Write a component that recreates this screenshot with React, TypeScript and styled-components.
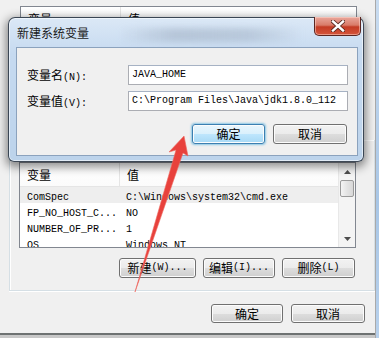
import styled, { createGlobalStyle } from "styled-components"

const GlobalStyle = createGlobalStyle`
  html, body {
    margin: 0;
    padding: 0;
    background: #f0f0f0;
  }
  body {
    font-family: "Noto Sans CJK SC", "Liberation Sans", sans-serif;
    color: #000;
  }
`

const Han = styled.span`
  font-family: "Noto Sans CJK SC", sans-serif;
  font-size: 12px;
`

const Latin = styled.span`
  font-family: "Liberation Mono", monospace;
  font-size: 10px;
`

const Mixed = ({ text }: { text: string }) => (
  <>
    {text
      .split(/([\u4e00-\u9fff]+)/)
      .filter(Boolean)
      .map((part, i) =>
        /[\u4e00-\u9fff]/.test(part) ? <Han key={i}>{part}</Han> : <Latin key={i}>{part}</Latin>
      )}
  </>
)

const Screen = styled.div`
  position: relative;
  width: 379px;
  height: 338px;
  overflow: hidden;
  display: flex;
`

const EnvWindow = styled.div`
  width: 376px;
  height: 338px;
  box-sizing: border-box;
  background: #f0f0f0;
  border-right: 1px solid #a9a9a9;
  display: flex;
  flex-direction: column;
  padding-top: 6px;
`

const GlassEdge = styled.div`
  width: 3px;
  height: 338px;
  background: linear-gradient(180deg, #c9dcf0, #a8c6e6 60%, #b8d1ec);
`

const ListBox = styled.div<{ $height: number; $left: number }>`
  margin-left: ${(p) => p.$left}px;
  width: 337px;
  height: ${(p) => p.$height}px;
  box-sizing: border-box;
  border: 1px solid #828790;
  background: #fff;
  display: flex;
  overflow: hidden;
`

const ListBody = styled.div`
  flex: 1;
  display: flex;
  flex-direction: column;
  overflow: hidden;
`

const HeaderRow = styled.div`
  display: grid;
  grid-template-columns: 100px 1fr;
  height: 24px;
  flex: none;
  box-sizing: border-box;
  border-bottom: 1px solid #e5e5e5;
  background: linear-gradient(180deg, #ffffff, #fbfbfb);
`

const HeaderCell = styled.div<{ $divider?: boolean }>`
  display: flex;
  align-items: center;
  padding-left: 7px;
  border-right: ${(p) => (p.$divider ? "1px solid #e5e5e5" : "none")};
  line-height: 14px;
`

const Row = styled.div<{ $selected?: boolean }>`
  display: grid;
  grid-template-columns: 100px 1fr;
  height: 16px;
  flex: none;
  align-items: center;
  background: ${(p) => (p.$selected ? "#eeeeee" : "transparent")};
  line-height: 14px;
  white-space: nowrap;
`

const Cell = styled.div<{ $pad: number }>`
  padding-left: ${(p) => p.$pad}px;
  overflow: hidden;
`

const ScrollBar = styled.div`
  width: 17px;
  flex: none;
  display: flex;
  flex-direction: column;
  background: #f4f4f4;
  border-left: 1px solid #e8e8e8;
  box-sizing: border-box;
`

const ScrollArrow = styled.div`
  height: 17px;
  display: flex;
  align-items: center;
  justify-content: center;
`

const ScrollThumb = styled.div`
  height: 17px;
  margin: 0 1px;
  box-sizing: border-box;
  border: 1px solid #9a9a9a;
  border-radius: 2px;
  background: linear-gradient(90deg, #f4f4f4, #e4e4e4 50%, #d8d8d8);
`

const ScrollTrack = styled.div`
  flex: 1;
`

const GroupBox = styled.div`
  margin-top: 6px;
  margin-left: 9px;
  width: 366px;
  box-sizing: border-box;
  border: 1px solid #d5dfe5;
  border-top: none;
  box-shadow: 1px 1px 0 #ffffff inset, 0 1px 0 #ffffff;
  padding: 22px 19px 12px 9px;
  display: flex;
  flex-direction: column;
`

const ButtonRow = styled.div<{ $top: number }>`
  display: flex;
  justify-content: flex-end;
  gap: 7px;
  margin-top: ${(p) => p.$top}px;
`

const Button = styled.div<{ $width: number; $height?: number; $focused?: boolean }>`
  width: ${(p) => p.$width}px;
  height: ${(p) => p.$height ?? 20}px;
  box-sizing: border-box;
  border: 1px solid ${(p) => (p.$focused ? "#3c7fb1" : "#707070")};
  border-radius: 3px;
  background: ${(p) =>
    p.$focused
      ? "linear-gradient(180deg, #eaf6fd 0%, #d9f0fc 50%, #bee6fd 51%, #a7d9f5 100%)"
      : "linear-gradient(180deg, #f2f2f2 0%, #ebebeb 50%, #dddddd 51%, #cfcfcf 100%)"};
  box-shadow: ${(p) =>
    p.$focused ? "0 0 2px 1px rgba(72, 170, 220, 0.6), inset 0 0 0 1px #fcfcfc" : "inset 0 0 0 1px #fcfcfc"};
  display: flex;
  align-items: center;
  justify-content: center;
  line-height: 14px;
  white-space: nowrap;
`

const FooterRow = styled.div`
  display: flex;
  justify-content: flex-end;
  gap: 8px;
  margin-top: 13px;
  margin-right: 10px;
`

const WindowBottom = styled.div`
  margin-top: auto;
  height: 3px;
  border-top: 2px solid #6e7272;
  background: #c8c8c8;
`

const Dialog = styled.div`
  position: absolute;
  left: 8px;
  top: 17px;
  width: 356px;
  height: 145px;
  box-sizing: border-box;
  border: 1px solid rgba(35, 45, 58, 0.85);
  border-radius: 7px 7px 6px 6px;
  background: linear-gradient(180deg, #dbe8f6 0%, #c6daf0 25%, #bcd3eb 100%);
  box-shadow: inset 0 0 0 1px rgba(255, 255, 255, 0.55), 0 3px 10px 2px rgba(0, 0, 0, 0.45);
  display: flex;
  flex-direction: column;
`

const TitleBar = styled.div`
  position: relative;
  height: 29px;
  flex: none;
  display: flex;
  align-items: center;
  padding-left: 8px;
`

const TitleGlass = styled.div`
  position: absolute;
  left: 110px;
  right: 60px;
  top: 10px;
  height: 14px;
  background: linear-gradient(90deg, rgba(150, 165, 185, 0) 0%, rgba(150, 165, 185, 0.45) 30%, rgba(140, 155, 175, 0.35) 70%, rgba(150, 165, 185, 0) 100%);
  filter: blur(3px);
`

const Title = styled.div`
  position: relative;
  font-size: 12px;
  line-height: 14px;
  color: #1a1a1a;
  margin-top: 1px;
`

const CloseButton = styled.div`
  position: absolute;
  top: -1px;
  right: 2px;
  width: 47px;
  height: 19px;
  box-sizing: border-box;
  border: 1px solid #5a2520;
  border-top: none;
  border-radius: 0 0 5px 5px;
  background: linear-gradient(180deg, #e9a79c 0%, #d97b69 45%, #c43b24 55%, #d4553b 100%);
  box-shadow: inset 0 0 0 1px rgba(255, 220, 210, 0.5);
  display: flex;
  align-items: center;
  justify-content: center;
`

const Client = styled.div`
  flex: 1;
  margin: 0 5px 5px 7px;
  background: #f0f0f0;
  border: 1px solid #8ba2bd;
  padding: 17px 9px 0 10px;
  display: flex;
  flex-direction: column;
  gap: 6px;
`

const FieldRow = styled.div`
  display: flex;
  align-items: center;
`

const Label = styled.div`
  width: 101px;
  line-height: 14px;
`

const Input = styled.div`
  flex: 1;
  height: 20px;
  box-sizing: border-box;
  border: 1px solid #abadb3;
  border-top-color: #a6b2c4;
  background: #fff;
  display: flex;
  align-items: center;
  padding-left: 3px;
  line-height: 14px;
  white-space: nowrap;
`

const DialogButtons = styled.div`
  display: flex;
  justify-content: flex-end;
  gap: 8px;
  margin-top: 7px;
  margin-right: 1px;
`

const ArrowLayer = styled.svg`
  position: absolute;
  left: 0;
  top: 0;
  pointer-events: none;
`

const TriangleUp = () => (
  <svg width="7" height="4" viewBox="0 0 7 4">
    <path d="M0 4 L3.5 0 L7 4 Z" fill="#4d4d4d" />
  </svg>
)

const TriangleDown = () => (
  <svg width="7" height="4" viewBox="0 0 7 4">
    <path d="M0 0 L3.5 4 L7 0 Z" fill="#4d4d4d" />
  </svg>
)

const rows = [
  { name: "ComSpec", value: "C:\\Windows\\system32\\cmd.exe", selected: true },
  { name: "FP_NO_HOST_C...", value: "NO" },
  { name: "NUMBER_OF_PR...", value: "1" },
  { name: "OS", value: "Windows_NT" },
]

export default function App() {
  return (
    <Screen>
      <GlobalStyle />
      <EnvWindow>
        <ListBox $height={128} $left={20}>
          <ListBody>
            <HeaderRow>
              <HeaderCell $divider>
                <Mixed text="变量" />
              </HeaderCell>
              <HeaderCell>
                <Mixed text="值" />
              </HeaderCell>
            </HeaderRow>
          </ListBody>
        </ListBox>

        <GroupBox>
          <ListBox $height={86} $left={0}>
            <ListBody>
              <HeaderRow>
                <HeaderCell $divider>
                  <Mixed text="变量" />
                </HeaderCell>
                <HeaderCell>
                  <Mixed text="值" />
                </HeaderCell>
              </HeaderRow>
              {rows.map((r) => (
                <Row key={r.name} $selected={r.selected}>
                  <Cell $pad={7}>
                    <Latin>{r.name}</Latin>
                  </Cell>
                  <Cell $pad={6}>
                    <Latin>{r.value}</Latin>
                  </Cell>
                </Row>
              ))}
            </ListBody>
            <ScrollBar>
              <ScrollArrow>
                <TriangleUp />
              </ScrollArrow>
              <ScrollThumb />
              <ScrollTrack />
              <ScrollArrow>
                <TriangleDown />
              </ScrollArrow>
            </ScrollBar>
          </ListBox>
          <ButtonRow $top={10}>
            <Button $width={77}>
              <Mixed text="新建(W)..." />
            </Button>
            <Button $width={72}>
              <Mixed text="编辑(I)..." />
            </Button>
            <Button $width={73}>
              <Mixed text="删除(L)" />
            </Button>
          </ButtonRow>
        </GroupBox>

        <FooterRow>
          <Button $width={72} $height={19}>
            <Mixed text="确定" />
          </Button>
          <Button $width={74} $height={19}>
            <Mixed text="取消" />
          </Button>
        </FooterRow>

        <WindowBottom />
      </EnvWindow>
      <GlassEdge />

      <Dialog>
        <TitleBar>
          <TitleGlass />
          <Title>新建系统变量</Title>
          <CloseButton>
            <svg width="14" height="12" viewBox="0 0 14 12">
              <path d="M2 1.5 L12 10.5 M12 1.5 L2 10.5" stroke="#5a2a22" strokeWidth="4.2" strokeLinecap="square" />
              <path d="M2 1.5 L12 10.5 M12 1.5 L2 10.5" stroke="#ffffff" strokeWidth="2.4" strokeLinecap="square" />
            </svg>
          </CloseButton>
        </TitleBar>
        <Client>
          <FieldRow>
            <Label>
              <Mixed text="变量名(N):" />
            </Label>
            <Input>
              <Latin>JAVA_HOME</Latin>
            </Input>
          </FieldRow>
          <FieldRow>
            <Label>
              <Mixed text="变量值(V):" />
            </Label>
            <Input>
              <Latin>C:\Program Files\Java\jdk1.8.0_112</Latin>
            </Input>
          </FieldRow>
          <DialogButtons>
            <Button $width={73} $focused>
              <Mixed text="确定" />
            </Button>
            <Button $width={74}>
              <Mixed text="取消" />
            </Button>
          </DialogButtons>
        </Client>
      </Dialog>

      <ArrowLayer width="379" height="338" viewBox="0 0 379 338">
        <path
          d="M184 136 L188 156 L183 153 L135 292 L176 150 L169 152 Z"
          fill="#e8413c"
          stroke="#ef6a62"
          strokeWidth="0.6"
          strokeLinejoin="round"
        />
      </ArrowLayer>
    </Screen>
  )
}
